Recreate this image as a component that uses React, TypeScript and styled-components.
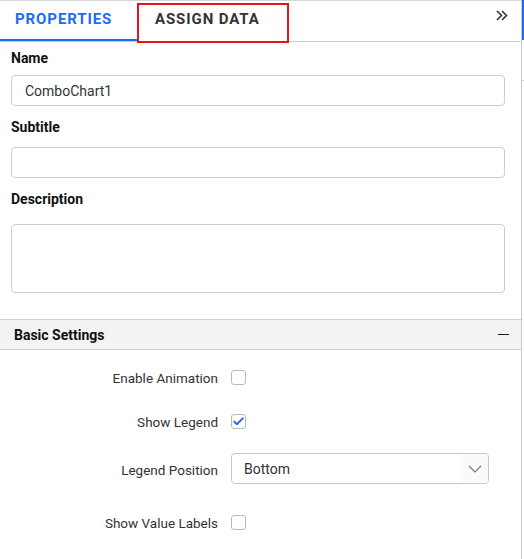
import React from "react";
import styled, { createGlobalStyle } from "styled-components";

const Global = createGlobalStyle`
  html, body { margin: 0; padding: 0; background: #fff; }
  body { font-family: Roboto, "Liberation Sans", Arial, sans-serif; }
  * { box-sizing: border-box; }
`;

const Page = styled.div`
  display: flex;
  width: 524px;
  height: 559px;
  background: #fff;
  overflow: hidden;
`;

const Panel = styled.div`
  width: 522px;
  flex: none;
  border-right: 1px solid #c9c9c9;
  display: flex;
  flex-direction: column;
`;

const Edge = styled.div`
  width: 2px;
  flex: none;
  display: flex;
  flex-direction: column;
`;

const EdgeActive = styled.div`
  height: 40px;
  background: #1a6cf5;
`;

const EdgeTick = styled.div`
  margin-top: 40px;
  height: 1px;
  background: #cfcfcf;
`;

const TabBar = styled.div`
  display: flex;
  align-items: stretch;
  height: 42px;
  border-top: 1px solid #d6d6d6;
  border-bottom: 1px solid #cfcfcf;
`;

const Tab = styled.div<{ $active?: boolean; $width: number; $pad: number; $marked?: boolean }>`
  position: relative;
  width: ${(p) => p.$width}px;
  padding: 8px 0 0 ${(p) => p.$pad}px;
  font-size: 15px;
  font-weight: 700;
  line-height: 20px;
  letter-spacing: 0.9px;
  color: ${(p) => (p.$active ? "#1a6cf5" : "#333")};
  box-shadow: ${(p) => (p.$active ? "inset 0 -2px 0 #1a6cf5" : "none")};
  &::after {
    content: "";
    display: ${(p) => (p.$marked ? "block" : "none")};
    position: absolute;
    left: 0;
    right: 0;
    top: 2px;
    bottom: -2px;
    border: 2px solid #e5141d;
  }
`;

const Collapse = styled.div`
  margin-left: auto;
  padding: 9px 13px 0 0;
  color: #333;
  display: flex;
  align-items: flex-start;
`;

const Form = styled.div`
  display: flex;
  flex-direction: column;
  padding: 6px 16px 0 11px;
`;

const Field = styled.div<{ $top?: number; $gap: number }>`
  display: flex;
  flex-direction: column;
  margin-top: ${(p) => p.$top ?? 0}px;
  gap: ${(p) => p.$gap}px;
`;

const FieldLabel = styled.div`
  font-size: 14px;
  font-weight: 700;
  line-height: 20px;
  color: #111;
`;

const TextBox = styled.div<{ $height: number }>`
  height: ${(p) => p.$height}px;
  border: 1px solid #cecece;
  border-radius: 4px;
  padding: 0 13px;
  display: flex;
  align-items: ${(p) => (p.$height > 40 ? "flex-start" : "center")};
  font-size: 14px;
  color: #333;
`;

const SectionHeader = styled.div`
  margin-top: 26px;
  height: 31px;
  border-top: 1px solid #d0d0d0;
  border-bottom: 1px solid #d0d0d0;
  background: #f3f3f3;
  display: flex;
  align-items: center;
  padding: 0 12px 0 14px;
  font-size: 14px;
  font-weight: 700;
  color: #111;
`;

const Minus = styled.span`
  margin-left: auto;
  width: 11px;
  height: 1.5px;
  background: #1a1a1a;
`;

const Settings = styled.div`
  display: flex;
  flex-direction: column;
`;

const Row = styled.div<{ $top: number }>`
  display: grid;
  grid-template-columns: 218px 258px;
  column-gap: 13px;
  align-items: center;
  min-height: 30px;
  margin-top: ${(p) => p.$top}px;
`;

const RowLabel = styled.div`
  text-align: right;
  font-size: 13.5px;
  line-height: 18px;
  padding-top: 2px;
  color: #333;
`;

const Check = styled.div`
  width: 15px;
  height: 15px;
  border: 1px solid #b9b9b9;
  border-radius: 3px;
  display: flex;
  align-items: center;
  justify-content: center;
  background: #fff;
`;

const Select = styled.div`
  height: 31px;
  border: 1px solid #c8c8c8;
  border-radius: 4px;
  display: flex;
  align-items: center;
  font-size: 14px;
  color: #333;
  overflow: hidden;
`;

const SelectValue = styled.span`
  flex: 1;
  padding-left: 12px;
`;

const SelectIcon = styled.span`
  width: 27px;
  align-self: stretch;
  background: #fafafa;
  display: flex;
  align-items: center;
  justify-content: center;
`;

const Checkbox = ({ checked }: { checked?: boolean }) => (
  <Check>
    {checked && (
      <svg width="11" height="9" viewBox="0 0 11 9">
        <path d="M1.3 4.6 L4 7.2 L9.8 1.4" fill="none" stroke="#2b5cff" strokeWidth="1.9" strokeLinecap="round" strokeLinejoin="round" />
      </svg>
    )}
  </Check>
);

export default function App() {
  return (
    <Page>
      <Global />
      <Panel>
        <TabBar>
          <Tab $active $width={137} $pad={15}>PROPERTIES</Tab>
          <Tab $width={152} $pad={18} $marked>ASSIGN DATA</Tab>
          <Collapse>
            <svg width="12" height="11" viewBox="0 0 12 11">
              <path d="M1 1 L5.5 5.5 L1 10 M6 1 L10.5 5.5 L6 10" fill="none" stroke="#333" strokeWidth="1.6" />
            </svg>
          </Collapse>
        </TabBar>
        <Form>
          <Field $gap={7}>
            <FieldLabel>Name</FieldLabel>
            <TextBox $height={31}>ComboChart1</TextBox>
          </Field>
          <Field $top={11} $gap={10}>
            <FieldLabel>Subtitle</FieldLabel>
            <TextBox $height={31} />
          </Field>
          <Field $top={11} $gap={15}>
            <FieldLabel>Description</FieldLabel>
            <TextBox $height={69} />
          </Field>
        </Form>
        <SectionHeader>
          Basic Settings
          <Minus />
        </SectionHeader>
        <Settings>
          <Row $top={12}>
            <RowLabel>Enable Animation</RowLabel>
            <Checkbox />
          </Row>
          <Row $top={14}>
            <RowLabel>Show Legend</RowLabel>
            <Checkbox checked />
          </Row>
          <Row $top={17}>
            <RowLabel>Legend Position</RowLabel>
            <Select>
              <SelectValue>Bottom</SelectValue>
              <SelectIcon>
                <svg width="14" height="8" viewBox="0 0 14 8">
                  <path d="M1 1 L7 7 L13 1" fill="none" stroke="#777" strokeWidth="1.1" />
                </svg>
              </SelectIcon>
            </Select>
          </Row>
          <Row $top={23}>
            <RowLabel>Show Value Labels</RowLabel>
            <Checkbox />
          </Row>
        </Settings>
      </Panel>
      <Edge>
        <EdgeActive />
        <EdgeTick />
      </Edge>
    </Page>
  );
}
